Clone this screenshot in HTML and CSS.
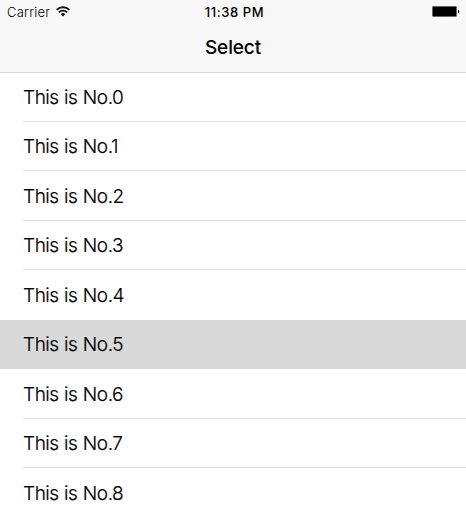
FILE: index.html
```html
<!DOCTYPE html>
<html lang="en">
<head>
<meta charset="utf-8">
<title>Select</title>
<link rel="stylesheet" href="styles.css">
</head>
<body>
<header class="header">
  <div class="status">
    <div class="carrier"><span>Carrier</span>
      <svg class="wifi" width="14" height="11" viewBox="0 0 14 11" fill="none" stroke="#111" stroke-width="1.8"><path d="M.6 3.9a9 9 0 0 1 12.800 0M2.900 6.300a5.800 5.800 0 0 1 8.200 0"/><path d="M7 10.500 4.700 8.200a3.200 3.200 0 0 1 4.600 0z" fill="#111" stroke="none"/></svg>
    </div>
    <div class="time">11:38 PM</div>
    <svg class="battery" width="28" height="11" viewBox="0 0 28 11"><rect x=".5" y=".5" width="24" height="10" rx=".8" fill="#000" stroke="#666"/><path d="M26 4c1.700 .2 1.700 3 0 3.200z"/></svg>
  </div>
  <h1 class="title">Select</h1>
</header>
<ul class="list">
  <li class="row"><span>This is No.0</span></li>
  <li class="row"><span>This is No.1</span></li>
  <li class="row"><span>This is No.2</span></li>
  <li class="row"><span>This is No.3</span></li>
  <li class="row before-selected"><span>This is No.4</span></li>
  <li class="row selected"><span>This is No.5</span></li>
  <li class="row"><span>This is No.6</span></li>
  <li class="row"><span>This is No.7</span></li>
  <li class="row last"><span>This is No.8</span></li>
</ul>
</body>
</html>
```

FILE: styles.css
```css
* { box-sizing: border-box; }
body { margin: 0; height: 517px; overflow: hidden; background: #fff; color: #000; font-family: Inter, "Liberation Sans", sans-serif; }
.header { height: 73px; background: #f8f8f8; border-bottom: 1px solid #d9d9d9; }
.status { height: 23px; display: grid; grid-template-columns: 1fr auto 1fr; align-items: center; padding: 0 6px 0 7px; }
.carrier { display: flex; align-items: center; gap: 6px; font-size: 13px; font-weight: 300; letter-spacing: .25px; }
.time { padding-left: 2px; font-size: 13px; font-weight: 500; letter-spacing: .6px; }
.battery { justify-self: end; }
.title { margin: 0; height: 49px; line-height: 49px; text-align: center; font-size: 19px; font-weight: 500; letter-spacing: -.1px; }
.list { margin: -1px 0 0; padding: 0; list-style: none; }
.row { height: 49.5px; padding-left: 23px; }
.row span { display: block; height: 49.5px; padding-top: .5px; line-height: 50px; border-bottom: 1px solid #e0e0e0; font-size: 19px; font-weight: 300; letter-spacing: -.45px; word-spacing: .5px; -webkit-text-stroke: .2px #000; }
.before-selected span, .selected span { border-bottom-color: transparent; }
.selected { background: #d9d9d9; }
.last span { border-bottom-color: #f0f0f0; }
```
